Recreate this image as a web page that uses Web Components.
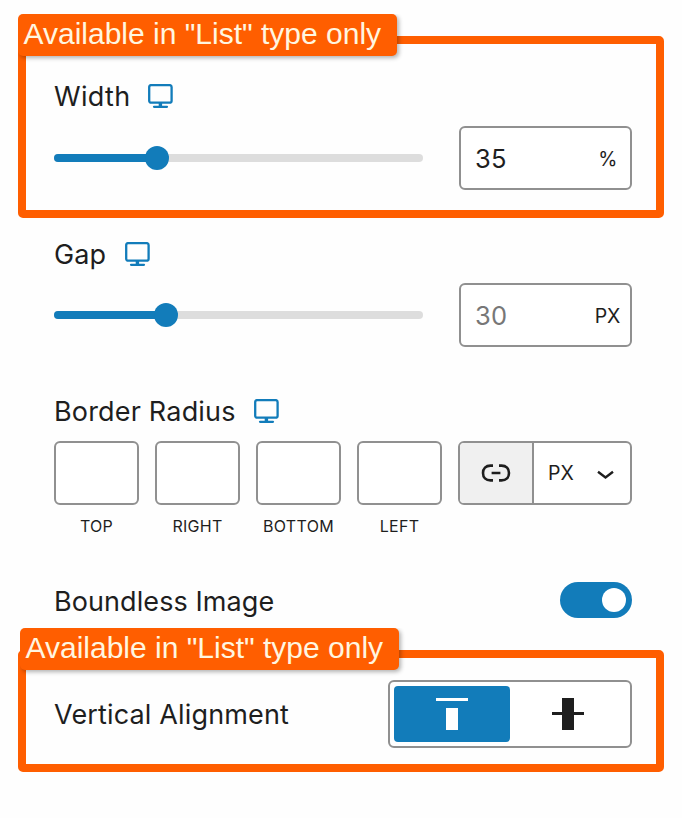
<!DOCTYPE html>
<html lang="en">
<head>
<meta charset="utf-8">
<title>Image settings</title>
<style>
  body { margin: 0; background: #fefefe; color: #1e1e1e; font-family: Inter, "Liberation Sans", sans-serif; }
  settings-panel { --accent: #127cba; --line: #909090; --callout: #ff5e00; }
</style>
</head>
<body>
<settings-panel>
  <callout-frame note='Available in "List" type only' style="height:166px;--pad:37px">
    <control-label device style="--ls:.35px">Width</control-label>
    <range-control value="104" number="35" unit="%" style="margin-top:13px"></range-control>
  </callout-frame>
  <panel-section style="margin-top:21px">
    <control-label device style="--ls:.1px;--gap:19px">Gap</control-label>
    <range-control value="113" number="30" unit="PX" placeholder style="margin-top:12px"></range-control>
  </panel-section>
  <panel-section style="margin-top:49px">
    <control-label device style="--ls:.18px;--gap:18.4px">Border Radius</control-label>
    <corner-control style="margin-top:13px"></corner-control>
  </panel-section>
  <panel-section style="margin-top:46px">
    <control-row>
      <control-label style="--ls:.08px;--drop:3px">Boundless Image</control-label>
      <toggle-switch slot="control"></toggle-switch>
    </control-row>
  </panel-section>
  <callout-frame note='Available in "List" type only' style="height:106px;margin-top:32px;--pad:22px;--shift:2px">
    <control-row>
      <control-label style="--ls:.15px;--drop:1px">Vertical Alignment</control-label>
      <align-picker slot="control"></align-picker>
    </control-row>
  </callout-frame>
</settings-panel>
<script>
const define = (name, render) => customElements.define(name, class extends HTMLElement {
  connectedCallback() {
    if (this.shadowRoot) return;
    this.attachShadow({ mode: 'open' }).innerHTML = render(this);
  }
});

define('settings-panel', () => `
  <style>:host{display:flex;flex-direction:column;box-sizing:border-box;height:818px;padding:36px 18px 0;overflow:hidden}</style>
  <slot></slot>`);

define('panel-section', () => `
  <style>:host{display:flex;flex-direction:column;padding:0 32px 0 36px}</style>
  <slot></slot>`);

define('callout-frame', el => `
  <style>
    :host{display:block;position:relative;border:8px solid var(--callout);border-radius:5px}
    .body{display:flex;flex-direction:column;padding:var(--pad) 24px 0 28px}
    .tag{position:absolute;left:calc(-8px + var(--shift,0px));top:-30px;box-sizing:border-box;width:379px;height:42px;
      padding-left:5.5px;border-radius:5px;background:var(--callout);color:#fff6e0;box-shadow:2px 2px 4px rgba(0,0,0,.3);
      clip-path:inset(0 -8px -8px 0);
      font:30px/40px "Liberation Sans",sans-serif;white-space:nowrap}
  </style>
  <div class="tag">${el.getAttribute('note')}</div>
  <div class="body"><slot></slot></div>`);

define('control-label', el => `
  <style>
    :host{display:flex;align-items:center;gap:var(--gap,17px);box-sizing:content-box;height:32px;padding-top:var(--drop,0);font-size:27px;line-height:32px;letter-spacing:var(--ls);white-space:nowrap}
    svg{width:25px;height:24px;flex:none;margin-bottom:2px}
  </style>
  <span><slot></slot></span>
  ${el.hasAttribute('device') ? `<svg viewBox="0 0 25 24" fill="none" stroke="var(--accent)">
    <rect x="1.2" y="1.1" width="22.4" height="17.6" rx="2" stroke-width="2.3"/>
    <path d="M12.4 18.5V22" stroke-width="3.4"/><path d="M6 22.8h13" stroke-width="2.2" stroke-linecap="round"/></svg>` : ''}`);

define('range-control', el => `
  <style>
    :host{display:grid;grid-template-columns:369px 173px;justify-content:space-between;align-items:center}
    .track{display:flex;align-items:center;height:8px;border-radius:4px;background:#ddd}
    .fill{height:8px;width:${el.getAttribute('value') - 12}px;border-radius:4px 0 0 4px;background:var(--accent)}
    .thumb{width:24px;height:24px;margin-left:-1px;border-radius:50%;background:var(--accent)}
    .field{box-sizing:border-box;display:flex;align-items:center;justify-content:space-between;height:64px;padding:2px 10px 0 14px;
      border:2px solid var(--line);border-radius:6px;background:#fff;font-size:25.5px;line-height:30px}
    .num{letter-spacing:.2px;color:${el.hasAttribute('placeholder') ? '#777' : '#1e1e1e'}}
    .unit{font-size:19.5px;line-height:28px;padding-bottom:1px;letter-spacing:-.3px}
    .pct{padding-right:3px}
  </style>
  <div class="track"><div class="fill"></div><div class="thumb"></div></div>
  <div class="field"><span class="num">${el.getAttribute('number')}</span><span class="unit ${el.getAttribute('unit') === '%' ? 'pct' : ''}">${el.getAttribute('unit')}</span></div>`);

define('corner-control', () => `
  <style>
    :host{display:flex;justify-content:space-between;align-items:flex-start}
    .cell{display:flex;flex-direction:column;align-items:center;width:85px;font-size:16px;line-height:20px;letter-spacing:.3px}
    .box{box-sizing:border-box;width:85px;height:64px;margin-bottom:11px;border:2px solid var(--line);border-radius:6px;background:#fff}
    .group{box-sizing:border-box;display:flex;width:174px;height:64px;border:2px solid var(--line);border-radius:6px;background:#fff;overflow:hidden}
    .link{display:flex;align-items:center;justify-content:center;width:72px;background:#f0f0f0;border-right:2px solid var(--line)}
    .unit{flex:1;display:flex;align-items:center;justify-content:space-between;padding:0 16px 0 14px;font-size:19.5px;line-height:24px;letter-spacing:.1px}
    svg{display:block}
  </style>
  ${['TOP', 'RIGHT', 'BOTTOM', 'LEFT'].map(t => `<div class="cell"><div class="box"></div><span>${t}</span></div>`).join('')}
  <div class="group">
    <div class="link"><svg width="30" height="20" viewBox="0 0 30 20" fill="none" stroke="#1e1e1e" stroke-width="2.6">
      <path d="M12 2.6H9.5C4.8 2.6 2 5.6 2 10s2.8 7.4 7.5 7.4H12M18 2.6h2.5C25.2 2.6 28 5.6 28 10s-2.8 7.4-7.5 7.4H18M10.6 10h8.8"/></svg></div>
    <div class="unit"><span>PX</span><svg width="17" height="10" viewBox="0 0 17 10" fill="none" stroke="#1e1e1e" stroke-width="2.4" style="margin-top:3px"><path d="M1 1.8l7.5 5.6L16 1.8"/></svg></div>
  </div>`);

define('control-row', () => `
  <style>:host{display:flex;justify-content:space-between;align-items:center}</style>
  <slot></slot><slot name="control"></slot>`);

define('toggle-switch', () => `
  <style>
    :host{display:flex;justify-content:flex-end;align-items:center;box-sizing:border-box;width:72px;height:36px;padding-right:6px;border-radius:18px;background:var(--accent)}
    i{width:24px;height:24px;border-radius:50%;background:#fff}
  </style><i></i>`);

define('align-picker', () => `
  <style>
    :host{display:flex;box-sizing:border-box;width:244px;height:68px;padding:4px;border:2px solid var(--line);border-radius:6px;background:#fff}
    div{display:flex;align-items:center;justify-content:center;width:116px;height:56px;border-radius:4px;color:#1e1e1e}
    .on{background:var(--accent);color:#fff}
  </style>
  <div class="on"><svg width="32" height="32" fill="currentColor" shape-rendering="crispEdges"><path d="M0 0h32v3H0zM10 10h12v22H10z"/></svg></div>
  <div><svg width="32" height="32" fill="currentColor" shape-rendering="crispEdges"><path d="M0 14h32v3H0zM10 0h12v32H10z"/></svg></div>`);
</script>
</body>
</html>
